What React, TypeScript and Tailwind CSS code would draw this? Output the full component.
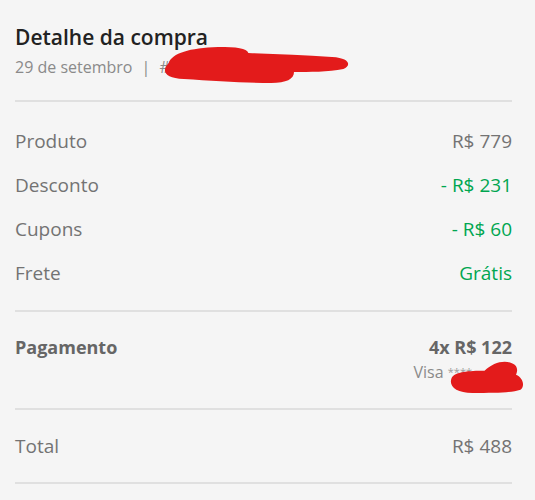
const Row = ({ label, value, green }: { label: string; value: string; green?: boolean }) => (
  <div className="flex items-center justify-between h-[44px]">
    <span className="text-[19px] text-[#737373]">{label}</span>
    <span className={green ? "text-[19px] text-[#00a650]" : "text-[19px] text-[#737373]"}>{value}</span>
  </div>
);

const Scribble = ({ className, d }: { className: string; d: string }) => (
  <svg className={className} viewBox="0 0 100 40" preserveAspectRatio="none">
    <path d={d} fill="#e31b1b" />
  </svg>
);

export default function App() {
  return (
    <div className="min-h-[500px] bg-[#f5f5f5] pl-[15px] pr-[23px] pt-[22px] font-['Open_Sans',sans-serif]">
      <div className="relative pb-[22px] border-b-2 border-[#e0e0e0]">
        <h1 className="text-[21px] leading-[30px] font-semibold text-[#222]">Detalhe da compra</h1>
        <p className="mt-[4px] text-[16px] leading-[22px] text-[#8a8a8a]">
          29 de setembro <span className="mx-[5px]">|</span> #
        </p>
        <Scribble
          className="absolute left-[146px] top-[23px] w-[190px] h-[40px]"
          d="M4 18 C6 8 15 3 30 2 C40 2 45 3 46 8 C60 9 75 10 90 12 C100 13 100 21 96 24 C88 27 78 27 70 27 C70 34 66 38 58 38 C45 38 28 36 12 34 C2 33 0 26 4 18 Z"
        />
      </div>

      <div className="pt-[17px] pb-[15px] border-b-2 border-[#e0e0e0]">
        <Row label="Produto" value="R$ 779" />
        <Row label="Desconto" value="- R$ 231" green />
        <Row label="Cupons" value="- R$ 60" green />
        <Row label="Frete" value="Grátis" green />
      </div>

      <div className="relative pt-[23px] pb-[23px] border-b-2 border-[#e0e0e0] flex justify-between">
        <span className="text-[18px] leading-[24px] font-bold text-[#666]">Pagamento</span>
        <div className="flex flex-col items-end">
          <span className="text-[18px] leading-[24px] font-bold text-[#666]">4x R$ 122</span>
          <span className="text-[16px] leading-[26px] text-[#8a8a8a]">
            Visa <span className="text-[11px] align-top text-[#9a9a9a]">****</span>
            <span className="inline-block w-[40px]" />
          </span>
        </div>
        <Scribble
          className="absolute left-[435px] top-[48px] w-[75px] h-[33px]"
          d="M2 22 C6 14 25 13 46 13 C56 4 70 0 80 3 C92 6 90 14 88 18 C98 22 100 32 94 36 C80 40 60 40 30 40 C8 40 -2 32 2 22 Z"
        />
      </div>

      <div className="flex items-center justify-between h-[74px] border-b-2 border-[#e0e0e0]">
        <span className="text-[19px] text-[#737373]">Total</span>
        <span className="text-[19px] text-[#737373]">R$ 488</span>
      </div>
    </div>
  );
}
